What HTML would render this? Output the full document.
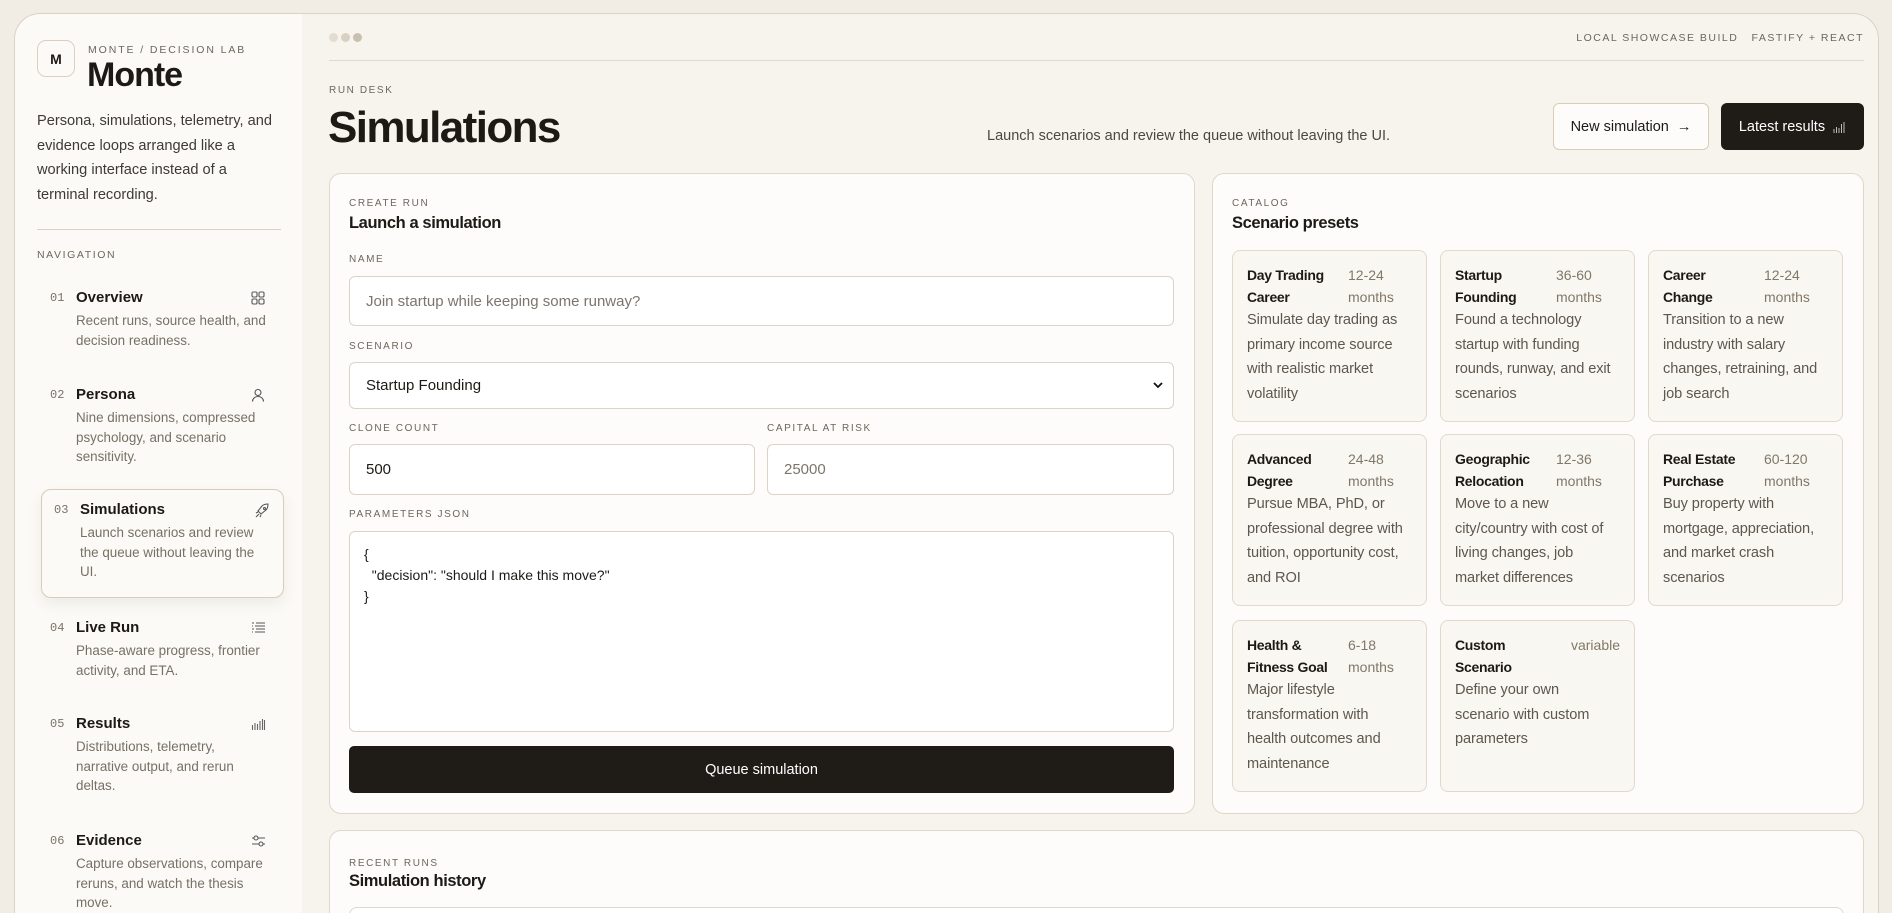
<!DOCTYPE html>
<html><head><meta charset="utf-8"><style>
*{box-sizing:border-box;margin:0;padding:0}
html{width:1892px;height:913px;overflow:hidden}
body{width:1892px;height:913px;overflow:hidden;background:#f1ede5;font-family:"Liberation Sans",sans-serif;color:#1d1a16;position:relative}
.abs{position:absolute}
.side{left:14px;top:13px;width:289px;height:900px;background:#fbfaf7;border:1px solid #ddd2c2;border-bottom:none;border-radius:26px 0 0 0}
.main{left:302px;top:13px;width:1577px;height:900px;background:#f7f4ee;border:1px solid #ddd2c2;border-left:none;border-bottom:none;border-radius:0 26px 0 0}
.lbl{font-size:10.5px;letter-spacing:1.6px;color:#6d665c;text-transform:uppercase}
.nav{position:absolute;left:37px;width:245px}
.nav .n{position:absolute;left:13px;top:2px;font-family:"Liberation Mono",monospace;font-size:12px;color:#7a7368}
.nav .t{position:absolute;left:39px;top:0;font-size:15px;font-weight:bold;color:#1d1a16}
.nav .d{position:absolute;left:39px;top:22px;width:200px;font-size:13.4px;line-height:19.5px;color:#777065}
.nav svg{position:absolute;left:214px;top:2px}
.card{background:#fdfcfa;border:1px solid #e0d7ca;border-radius:12px}
.inp{position:absolute;background:#fff;border:1px solid #ddd3c5;border-radius:6px;font-size:15px;padding-left:16px;display:flex;align-items:center}
.p{position:absolute;width:195px;height:172px;background:#f9f7f2;border:1px solid #e2d9cb;border-radius:8px;padding:14px 14px}
.p .h{display:flex;justify-content:space-between;font-size:14px;line-height:21.5px}
.p .h b{color:#1d1a16;letter-spacing:-0.3px}
.p .h span{color:#807869;width:64px}
.p .x{font-size:14.6px;line-height:24.5px;color:#5d574e;letter-spacing:-0.1px;padding-right:6px}
</style></head><body>
<div class="abs side"></div>
<div class="abs main"></div>

<!-- sidebar -->
<div class="abs" style="left:37px;top:40px;width:38px;height:37px;border:1px solid #dccfbd;border-radius:9px;font-weight:bold;font-size:14px;display:flex;align-items:center;justify-content:center">M</div>
<div class="abs lbl" style="left:88px;top:44px;font-size:10.5px;letter-spacing:1.9px">MONTE / DECISION LAB</div>
<div class="abs" style="left:87px;top:56px;font-size:34px;font-weight:bold;letter-spacing:-1px">Monte</div>
<div class="abs" style="left:37px;top:109px;width:240px;font-size:14.6px;line-height:24.5px;color:#3e3a34">Persona, simulations, telemetry, and evidence loops arranged like a working interface instead of a terminal recording.</div>
<div class="abs" style="left:37px;top:229px;width:244px;height:1px;background:#ddcfbd"></div>
<div class="abs lbl" style="left:37px;top:249px">NAVIGATION</div>

<div class="nav" style="top:289px"><div class="n">01</div><div class="t">Overview</div><div class="d">Recent runs, source health, and decision readiness.</div>
<svg width="14" height="14" viewBox="0 0 14 14" fill="none" stroke="#555" stroke-width="1.1"><rect x="1" y="1" width="5" height="5" rx="1.2"/><rect x="8" y="1" width="5" height="5" rx="1.2"/><rect x="1" y="8" width="5" height="5" rx="1.2"/><rect x="8" y="8" width="5" height="5" rx="1.2"/></svg></div>
<div class="nav" style="top:386px"><div class="n">02</div><div class="t">Persona</div><div class="d">Nine dimensions, compressed psychology, and scenario sensitivity.</div>
<svg width="14" height="14" viewBox="0 0 14 14" fill="none" stroke="#555" stroke-width="1.1"><circle cx="7" cy="4.5" r="3"/><path d="M1.5 13.5c0-3 2.5-5 5.5-5s5.5 2 5.5 5"/></svg></div>

<div class="abs" style="left:41px;top:489px;width:243px;height:109px;border:1px solid #d9ccb8;border-radius:10px;background:#fbfaf6;box-shadow:0 6px 14px rgba(80,60,30,.08)"></div>
<div class="nav" style="top:501px;left:41px"><div class="n">03</div><div class="t">Simulations</div><div class="d" style="width:190px">Launch scenarios and review the queue without leaving the UI.</div>
<svg style="left:214px" width="15" height="15" viewBox="0 0 15 15" fill="none" stroke="#555" stroke-width="1.1"><path d="M5 10l-2-2 4-5c2-2 5-2 6-2 0 1 0 4-2 6l-5 4z"/><circle cx="9.5" cy="5.5" r="1"/><path d="M3 9l-2 1M6 12l-1 2M4 11l-3 3"/></svg></div>

<div class="nav" style="top:619px"><div class="n">04</div><div class="t">Live Run</div><div class="d">Phase-aware progress, frontier activity, and ETA.</div>
<svg width="15" height="14" viewBox="0 0 15 14" fill="none" stroke="#555" stroke-width="1.1"><path d="M1 2h2M5 2h9M1 5h1M4 5h10M1 8h2M5 8h9M1 11h1M4 11h10"/></svg></div>
<div class="nav" style="top:715px"><div class="n">05</div><div class="t">Results</div><div class="d" style="width:185px">Distributions, telemetry, narrative output, and rerun deltas.</div>
<svg width="15" height="14" viewBox="0 0 15 14" fill="none" stroke="#666" stroke-width="1.1"><path d="M1.5 13V8M4 13V6M6.5 13V7M9 13V4M11.5 13V2M13.5 13V3"/></svg></div>
<div class="nav" style="top:832px"><div class="n">06</div><div class="t">Evidence</div><div class="d">Capture observations, compare reruns, and watch the thesis move.</div>
<svg width="15" height="14" viewBox="0 0 15 14" fill="none" stroke="#555" stroke-width="1.1"><path d="M1 4h13M1 10h13"/><circle cx="5" cy="4" r="2" fill="#fbfaf7"/><circle cx="10" cy="10" r="2" fill="#fbfaf7"/></svg></div>

<!-- main top -->
<div class="abs" style="left:329px;top:33px;width:9px;height:9px;border-radius:50%;background:#e2dcd2"></div>
<div class="abs" style="left:341px;top:33px;width:9px;height:9px;border-radius:50%;background:#d8d0c3"></div>
<div class="abs" style="left:353px;top:33px;width:9px;height:9px;border-radius:50%;background:#c9bfb0"></div>
<div class="abs lbl" style="right:28px;top:32px;font-size:10.5px;letter-spacing:1.5px;color:#6d665c">LOCAL SHOWCASE BUILD &nbsp;&nbsp;FASTIFY + REACT</div>
<div class="abs" style="left:329px;top:60px;width:1535px;height:1px;background:#e2d9cc"></div>
<div class="abs lbl" style="left:329px;top:85px;font-size:10px">RUN DESK</div>
<div class="abs" style="left:328px;top:103px;font-size:44px;font-weight:bold;letter-spacing:-1.6px">Simulations</div>
<div class="abs" style="left:987px;top:128px;font-size:14.5px;color:#4d473f">Launch scenarios and review the queue without leaving the UI.</div>
<div class="abs" style="left:1553px;top:103px;width:156px;height:47px;border:1px solid #d9ccb8;border-radius:6px;background:#fdfcfa;font-size:14.5px;display:flex;align-items:center;justify-content:center">New simulation &nbsp;→</div>
<div class="abs" style="left:1721px;top:103px;width:143px;height:47px;border-radius:6px;background:#1f1b16;color:#fff;font-size:14.5px;display:flex;align-items:center;justify-content:center">Latest results &nbsp;<svg width="13" height="12" viewBox="0 0 13 12" fill="none" stroke="#bbb" stroke-width="1"><path d="M1 12V8M3.5 12V6M6 12V7M8.5 12V3M11 12V1"/></svg></div>

<!-- create card -->
<div class="abs card" style="left:329px;top:173px;width:866px;height:641px"></div>
<div class="abs lbl" style="left:349px;top:198px;font-size:10px">CREATE RUN</div>
<div class="abs" style="left:349px;top:214px;font-size:16.5px;font-weight:bold;letter-spacing:-0.4px">Launch a simulation</div>
<div class="abs lbl" style="left:349px;top:254px;font-size:10px">NAME</div>
<div class="inp" style="left:349px;top:276px;width:825px;height:50px;color:#7b756c">Join startup while keeping some runway?</div>
<div class="abs lbl" style="left:349px;top:341px;font-size:10px">SCENARIO</div>
<div class="inp" style="left:349px;top:362px;width:825px;height:47px;color:#1d1a16;justify-content:space-between;padding-right:10px">Startup Founding<svg width="10" height="7" viewBox="0 0 10 7" fill="none" stroke="#111" stroke-width="1.8"><path d="M1 1l4 4 4-4"/></svg></div>
<div class="abs lbl" style="left:349px;top:423px;font-size:10px">CLONE COUNT</div>
<div class="abs lbl" style="left:767px;top:423px;font-size:10px">CAPITAL AT RISK</div>
<div class="inp" style="left:349px;top:444px;width:406px;height:51px;color:#1d1a16">500</div>
<div class="inp" style="left:767px;top:444px;width:407px;height:51px;color:#7b756c">25000</div>
<div class="abs lbl" style="left:349px;top:509px;font-size:10px">PARAMETERS JSON</div>
<div class="inp" style="left:349px;top:531px;width:825px;height:201px;align-items:flex-start;padding:12px 0 0 14px;font-size:14px;line-height:21px;white-space:pre;color:#1d1a16">{
  "decision": "should I make this move?"
}</div>
<div class="abs" style="left:349px;top:746px;width:825px;height:47px;background:#1f1b16;border-radius:5px;color:#fff;font-size:14.5px;display:flex;align-items:center;justify-content:center">Queue simulation</div>

<!-- catalog -->
<div class="abs card" style="left:1212px;top:173px;width:652px;height:641px"></div>
<div class="abs lbl" style="left:1232px;top:198px;font-size:10px">CATALOG</div>
<div class="abs" style="left:1232px;top:214px;font-size:16.5px;font-weight:bold;letter-spacing:-0.4px">Scenario presets</div>

<div class="p" style="left:1232px;top:250px"><div class="h"><b>Day Trading<br>Career</b><span>12-24<br>months</span></div><div class="x">Simulate day trading as primary income source with realistic market volatility</div></div>
<div class="p" style="left:1440px;top:250px"><div class="h"><b>Startup<br>Founding</b><span>36-60<br>months</span></div><div class="x">Found a technology<br>startup with funding rounds, runway, and exit scenarios</div></div>
<div class="p" style="left:1648px;top:250px"><div class="h"><b>Career<br>Change</b><span>12-24<br>months</span></div><div class="x">Transition to a new industry with salary changes, retraining, and job search</div></div>
<div class="p" style="left:1232px;top:434px"><div class="h"><b>Advanced<br>Degree</b><span>24-48<br>months</span></div><div class="x">Pursue MBA, PhD, or professional degree with tuition, opportunity cost, and ROI</div></div>
<div class="p" style="left:1440px;top:434px"><div class="h"><b>Geographic<br>Relocation</b><span>12-36<br>months</span></div><div class="x">Move to a new<br>city/country with cost of living changes, job market differences</div></div>
<div class="p" style="left:1648px;top:434px"><div class="h"><b>Real Estate<br>Purchase</b><span>60-120<br>months</span></div><div class="x">Buy property with mortgage, appreciation, and market crash scenarios</div></div>
<div class="p" style="left:1232px;top:620px"><div class="h"><b>Health &amp;<br>Fitness Goal</b><span>6-18<br>months</span></div><div class="x">Major lifestyle<br>transformation with<br>health outcomes and maintenance</div></div>
<div class="p" style="left:1440px;top:620px"><div class="h"><b>Custom<br>Scenario</b><span style="width:auto">variable</span></div><div class="x">Define your own<br>scenario with custom parameters</div></div>

<!-- recent runs -->
<div class="abs card" style="left:329px;top:830px;width:1535px;height:100px"></div>
<div class="abs lbl" style="left:349px;top:858px;font-size:10px">RECENT RUNS</div>
<div class="abs" style="left:349px;top:872px;font-size:16.5px;font-weight:bold;letter-spacing:-0.4px">Simulation history</div>
<div class="abs" style="left:349px;top:907px;width:1495px;height:20px;border:1px solid #e0d7ca;border-radius:8px;background:#fff"></div>
</body></html>
